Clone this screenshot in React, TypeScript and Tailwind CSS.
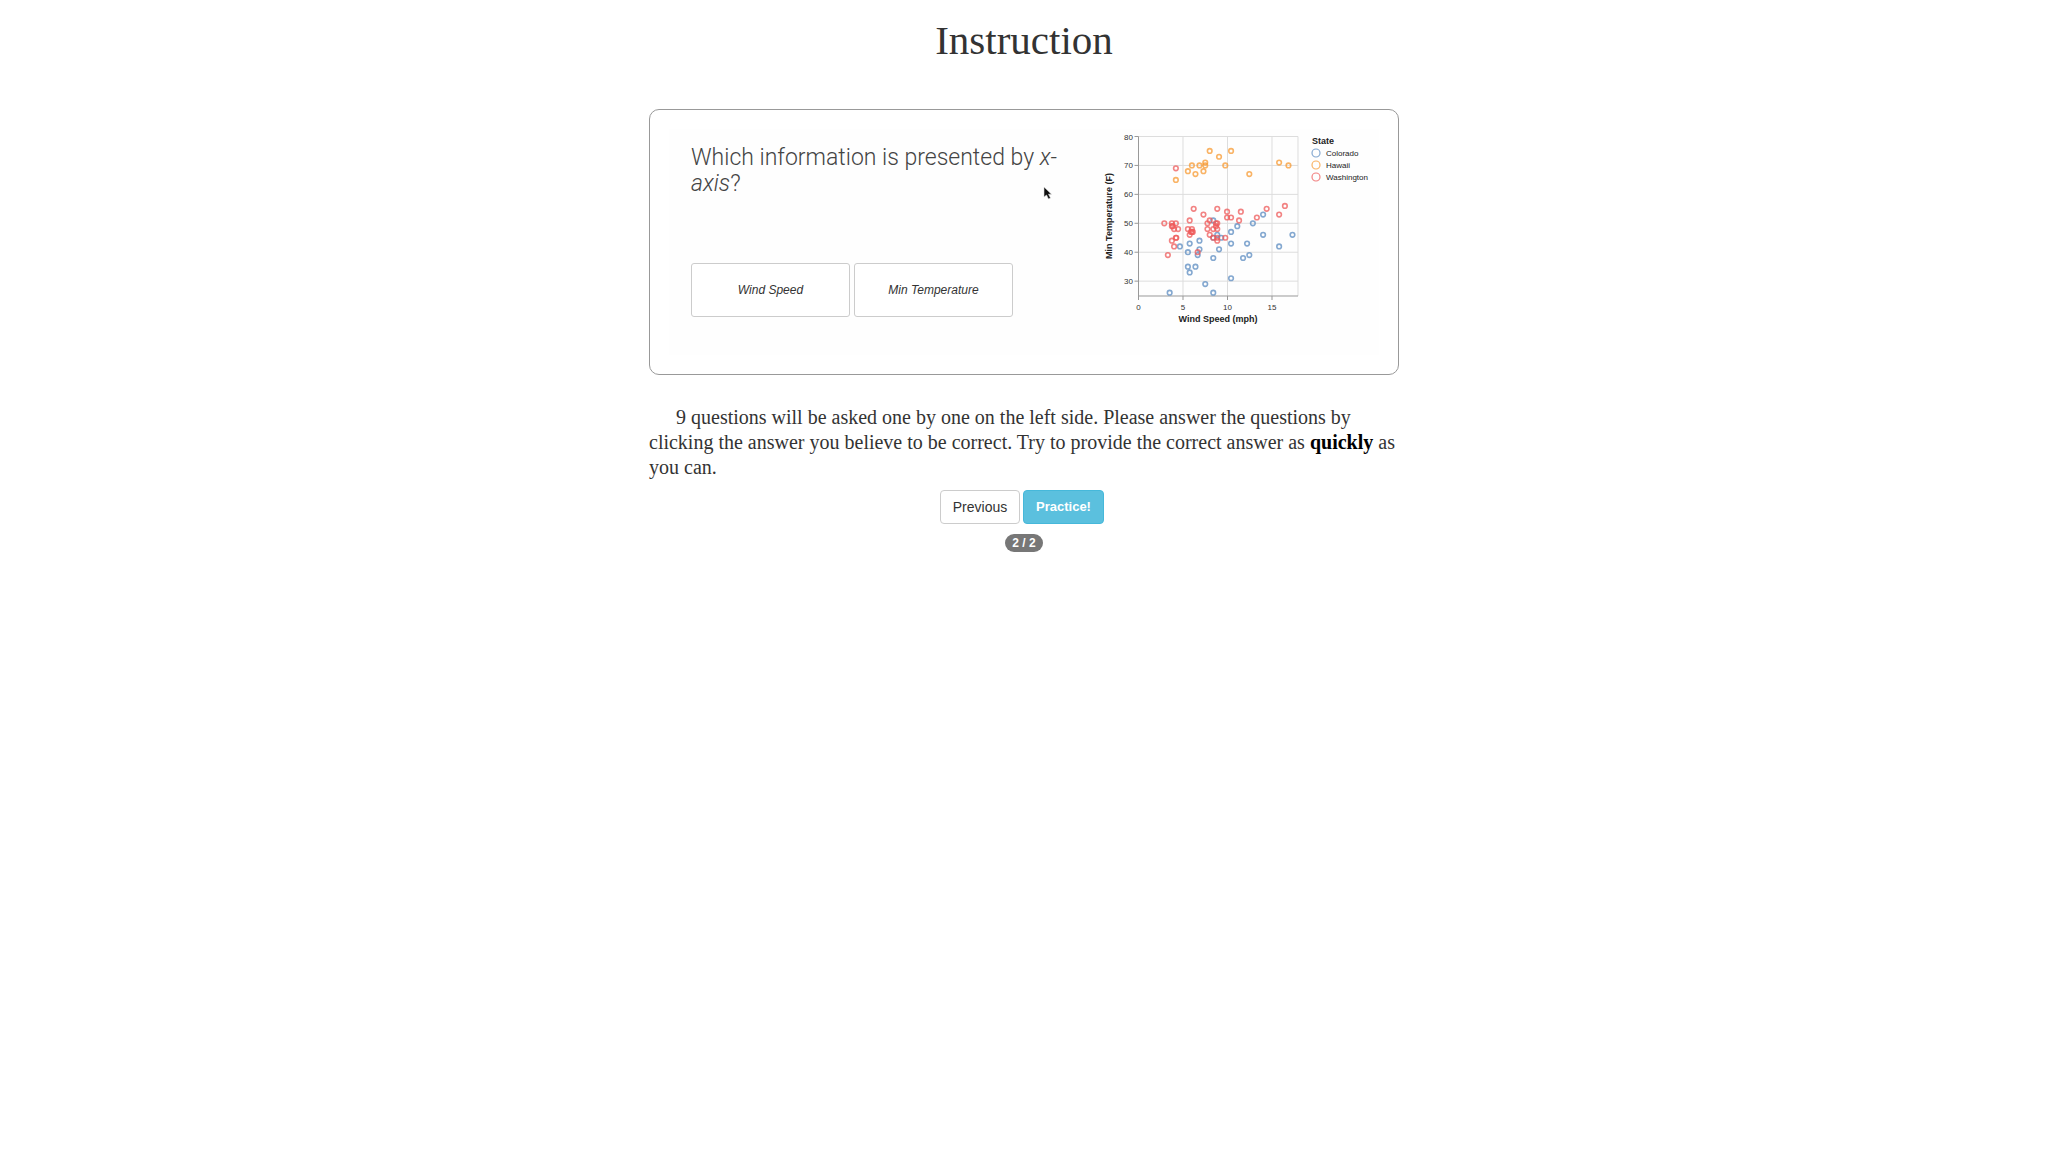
type Point = [number, number];

const colorado: Point[] = [
  [8.4, 51], [14, 53], [12.85, 50], [11.1, 49], [10.4, 47], [6.85, 44], [5.75, 43], [4.65, 42],
  [6.85, 41], [5.55, 40], [6.65, 39], [5.55, 35], [6.4, 35], [5.75, 33], [7.5, 29], [3.5, 26],
  [8.4, 26], [10.4, 31], [8.4, 38], [9.05, 41], [11.75, 38], [12.45, 39], [10.4, 43], [12.2, 43],
  [15.8, 42], [14, 46], [17.3, 46], [8.4, 45], [9.3, 45], [8.85, 46],
];
const hawaii: Point[] = [
  [4.2, 65], [5.55, 68], [6, 70], [6.4, 67], [6.85, 70], [7.3, 68], [7.5, 71], [7.5, 70], [8, 75],
  [9.05, 73], [10.4, 75], [9.75, 70], [12.45, 67], [15.8, 71], [16.85, 70],
];
const washington: Point[] = [
  [4.2, 69], [2.9, 50], [3.75, 50], [4.2, 50], [3.75, 49], [3.85, 49], [4, 48], [4.45, 48], [6.2, 55],
  [7.3, 53], [5.75, 51], [5.55, 48], [6, 48], [8.85, 55], [9.95, 54], [9.95, 52], [10.4, 52],
  [11.5, 54], [11.3, 51], [13.3, 52], [14.4, 55], [15.8, 53], [16.45, 56], [7.75, 50], [8, 51],
  [8.85, 50], [8.7, 50], [8.4, 48], [7.75, 48], [8.85, 48], [8.7, 49], [3.75, 44],
  [4.2, 45], [4.25, 45], [4, 42], [3.3, 39], [5.75, 46], [6, 47], [6.1, 47], [5.9, 47], [8, 46],
  [6.65, 40], [8.4, 45], [8.85, 45], [9.75, 45], [8.85, 44],
];

const series = [
  { name: "Colorado", color: "#5b8bc0", points: colorado },
  { name: "Hawaii", color: "#f79a32", points: hawaii },
  { name: "Washington", color: "#ee5a5a", points: washington },
];

const px = (v: number) => 38.5 + v * 8.9;
const py = (v: number) => 11.5 + (80 - v) * 2.893;

function Chart() {
  return (
    <svg width="280" height="210" viewBox="-1 4 280 210" role="img" aria-label="Min Temperature by Wind Speed" className="shrink-0 font-['Liberation_Sans']">
      <g stroke="#dddddd" strokeWidth="1">
        {[80, 70, 60, 50, 40, 30].map((t) => (
          <line key={t} x1="38.5" x2="198" y1={py(t)} y2={py(t)} />
        ))}
        {[5, 10, 15].map((t) => (
          <line key={t} x1={px(t)} x2={px(t)} y1="11.5" y2="171" />
        ))}
        <line x1="198" x2="198" y1="11.5" y2="171" />
      </g>
      <g stroke="#999999" strokeWidth="1">
        <path d="M38.5 11.5V171H198" fill="none" />
        {[80, 70, 60, 50, 40, 30].map((t) => (
          <line key={t} x1="34.5" x2="38.5" y1={py(t)} y2={py(t)} />
        ))}
        {[0, 5, 10, 15].map((t) => (
          <line key={t} x1={px(t)} x2={px(t)} y1="171" y2="175" />
        ))}
      </g>
      <g fontSize="8" fill="#333333">
        {[80, 70, 60, 50, 40, 30].map((t) => (
          <text key={t} x="33" y={py(t) + 3} textAnchor="end">{t}</text>
        ))}
        {[0, 5, 10, 15].map((t) => (
          <text key={t} x={px(t)} y="185" textAnchor="middle">{t}</text>
        ))}
      </g>
      <g fontSize="9" fontWeight="700" fill="#222222" textAnchor="middle">
        <text x="118" y="197">Wind Speed (mph)</text>
        <text transform="translate(12 91) rotate(-90)">Min Temperature (F)</text>
      </g>
      {series.map((s) => (
        <g key={s.name} stroke={s.color} strokeOpacity="0.75" strokeWidth="1.6" fill="none">
          {s.points.map(([x, y], i) => (
            <circle key={i} cx={px(x)} cy={py(y)} r="2.3" />
          ))}
        </g>
      ))}
      <text x="212" y="19" fontSize="9" fontWeight="700" fill="#222222">State</text>
      {series.map((s, i) => (
        <g key={s.name}>
          <circle cx="216" cy={28 + i * 12} r="4" fill="none" stroke={s.color} strokeOpacity="0.75" strokeWidth="1.2" />
          <text x="226" y={31 + i * 12} fontSize="8" fill="#222222">{s.name}</text>
        </g>
      ))}
    </svg>
  );
}

function Answer({ label }: { label: string }) {
  return (
    <button type="button" className="h-[54px] w-[159px] rounded-[3px] border border-[#cccccc] bg-white text-[12px] italic text-[#333333]">
      {label}
    </button>
  );
}

export default function App() {
  return (
    <main className="min-h-screen bg-white px-4 font-['Liberation_Serif',serif] text-[#333333]">
      <div className="mx-auto max-w-[750px]">
        <h1 className="pt-5 text-center text-[41px] leading-10">Instruction</h1>

        <section className="relative mt-[49px] rounded-[10px] border border-[#999999] p-[19px] font-['Liberation_Sans',sans-serif]">
          <div className="flex h-[226px] justify-between bg-[#fefefe]">
            <div className="pl-[22px] pt-4">
              <h2 className="h-[118px] w-[370px] font-['Roboto',sans-serif] text-[23px] font-light leading-[26px] text-[#444444]">
                Which information is presented by <i>x-<br />axis</i>?
              </h2>
              <div className="flex gap-1">
                <Answer label="Wind Speed" />
                <Answer label="Min Temperature" />
              </div>
            </div>
            <Chart />
          </div>
          <svg className="absolute left-[393px] top-[76px]" width="10" height="15" viewBox="0 0 10 15" aria-hidden="true">
            <path d="M1 1v10l2.5-2 2 4 2-1-2-3.800h3z" fill="#111111" stroke="#dddddd" strokeWidth="0.6" />
          </svg>
        </section>

        <p className="mt-[30px] indent-[27px] text-[20px] leading-[25px]">
          9 questions will be asked one by one on the left side. Please answer the questions by clicking the answer you believe to be correct. Try to provide the correct answer as <b className="text-black">quickly</b> as you can.
        </p>

        <div className="mt-[10px] flex justify-center gap-[3px] pr-1 font-['Liberation_Sans',sans-serif] text-[14px]">
          <button type="button" className="h-[34px] w-20 rounded border border-[#cccccc] bg-white">Previous</button>
          <button type="button" className="h-[34px] w-[81px] rounded border border-[#46b8da] bg-[#5bc0de] text-[13px] font-bold text-white">Practice!</button>
        </div>
        <div className="mt-[10px] flex justify-center">
          <span className="rounded-[10px] bg-[#777777] px-[7px] font-['Liberation_Sans',sans-serif] text-[12px] font-bold leading-[18px] text-white">2 / 2</span>
        </div>
      </div>
    </main>
  );
}
